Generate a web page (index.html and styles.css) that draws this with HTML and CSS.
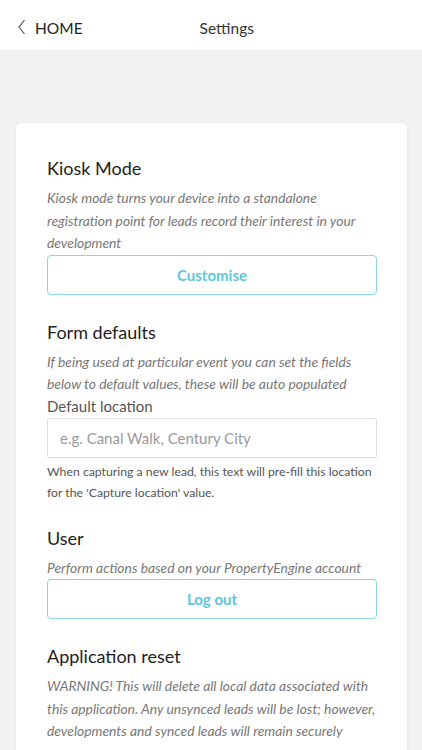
FILE: index.html
```html
<!DOCTYPE html>
<html lang="en">
<head>
<meta charset="utf-8">
<title>Settings</title>
<link rel="stylesheet" href="styles.css">
</head>
<body>
<header class="topbar">
  <a class="back" href="#">
    <svg class="chev" width="8" height="16" viewBox="0 0 8 16"><path d="M6.5 1 L1 8 L6.5 15" fill="none" stroke="#555" stroke-width="1.2"/></svg>
    <span>HOME</span>
  </a>
  <div class="title">Settings</div>
</header>
<main class="content">
  <section class="card">
    <div class="group">
      <h2 class="heading">Kiosk Mode</h2>
      <p class="desc">Kiosk mode turns your device into a standalone registration point for leads record their interest in your development</p>
      <button class="btn">Customise</button>
    </div>
    <div class="group">
      <h2 class="heading">Form defaults</h2>
      <p class="desc">If being used at particular event you can set the fields below to default values, these will be auto populated</p>
      <label class="label" for="loc">Default location</label>
      <input id="loc" class="input" type="text" placeholder="e.g. Canal Walk, Century City">
      <p class="help">When capturing a new lead, this text will pre-fill this location for the 'Capture location' value.</p>
    </div>
    <div class="group group-user">
      <h2 class="heading">User</h2>
      <p class="desc">Perform actions based on your PropertyEngine account</p>
      <button class="btn">Log out</button>
    </div>
    <div class="group">
      <h2 class="heading">Application reset</h2>
      <p class="desc">WARNING! This will delete all local data associated with this application. Any unsynced leads will be lost; however, developments and synced leads will remain securely</p>
    </div>
  </section>
</main>
</body>
</html>
```
FILE: styles.css
```css
* { box-sizing: border-box; }
html, body { margin: 0; padding: 0; }
body {
  font-family: Lato, "Open Sans", sans-serif;
  background: #f2f2f3;
  color: #222;
  width: 422px;
  overflow: hidden;
}
.topbar {
  height: 50px;
  background: #fff;
  display: flex;
  align-items: center;
  padding-left: 18px;
}
.back {
  display: flex;
  align-items: center;
  gap: 9px;
  color: #222;
  text-decoration: none;
  font-size: 15.5px;
  line-height: 20px;
  margin-top: 5px;
}
.chev { display: block; margin-top: -1px; }
.title {
  margin-left: 117px;
  font-size: 15.5px;
  line-height: 20px;
  color: #333;
  margin-top: 5px;
}
.content {
  padding: 73px 15px 0 16px;
}
.card {
  background: #fff;
  border-radius: 5px;
  box-shadow: 0 1px 5px rgba(0,0,0,0.07);
  padding: 33px 30px 40px 31px;
}
.group { display: flex; flex-direction: column; }
.group + .group { margin-top: 25px; }
.group-user { margin-top: 22px !important; }
.heading {
  margin: 0 0 7px;
  font-size: 18px;
  line-height: 24px;
  font-weight: 400;
  color: #1e1e1e;
}
.desc {
  margin: 0 -4px 0 0;
  font-style: italic;
  font-size: 13.85px;
  line-height: 22.5px;
  color: #777;
}
.btn {
  height: 40px;
  border: 1px solid #8dd6e4;
  border-radius: 4px;
  background: #fff;
  color: #5ec6da;
  font-family: Lato, sans-serif;
  font-weight: 700;
  font-size: 15px;
  padding: 0;
  width: 100%;
}
.label {
  font-size: 15px;
  line-height: 21px;
  color: #555;
}
.input {
  margin-top: 1px;
  height: 40px;
  border: 1px solid #ddd;
  border-radius: 2px;
  padding: 0 12px;
  font-family: Lato, sans-serif;
  font-size: 15px;
  color: #333;
  width: 100%;
}
.input::placeholder { color: #9a9a9a; }
.help {
  margin: 3px 0 0;
  font-size: 12.25px;
  line-height: 21.5px;
  color: #555;
}
```
